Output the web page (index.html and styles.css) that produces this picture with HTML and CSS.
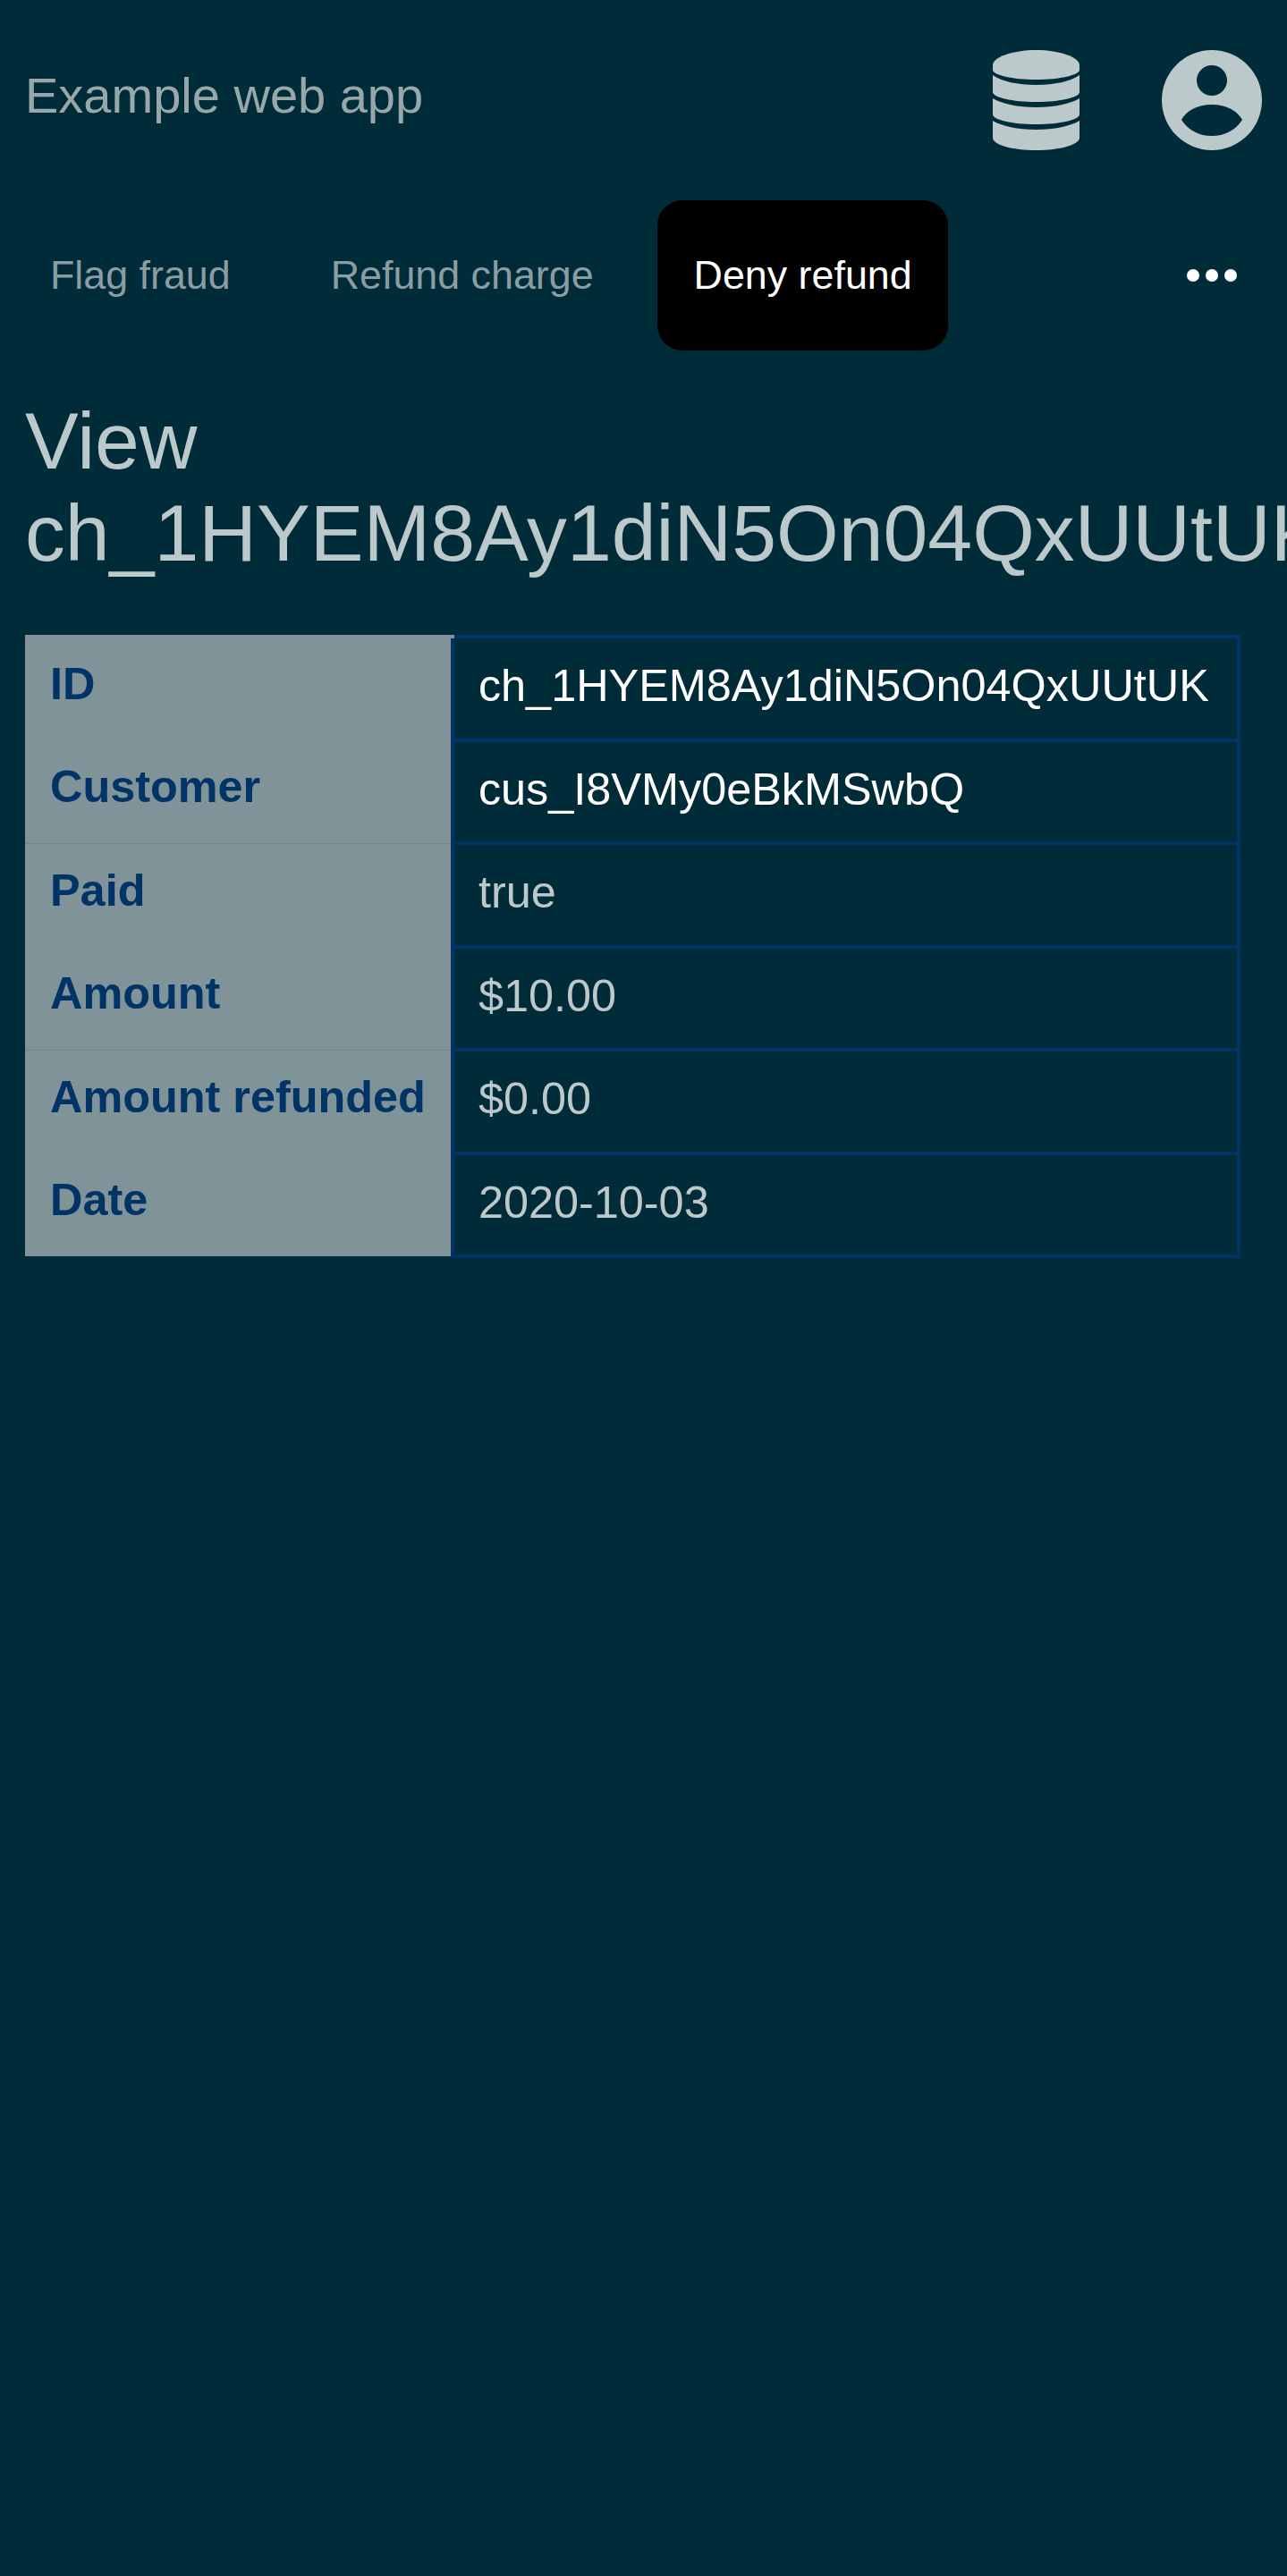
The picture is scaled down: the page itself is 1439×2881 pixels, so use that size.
FILE: index.html
```html
<!DOCTYPE html>
<html lang="en">
<head>
    <meta charset="UTF-8">
    <meta name="viewport" content="width=device-width, initial-scale=1.0">
    <title>Example web app</title>
    <link rel="stylesheet" href="styles.css">
</head>
<body>
    <header class="topbar">
        <a class="brand" href="#">Example web app</a>
        <div class="topbar-icons">
            <svg class="icon icon-db" viewBox="0 0 97 112">
                <path d="M97 17v5C97 28 75 33 48.500 33S0 28 0 22V17C0 8 22 0 48.500 0S97 8 97 17z"/>
                <path d="M97 28v19C97 53 75 58 48.500 58S0 53 0 47V28C10 35 28 39 48.500 39S87 35 97 28z"/>
                <path d="M97 54v18C97 78 75 83 48.500 83S0 78 0 72V54C10 60 28 64 48.500 64S87 60 97 54z"/>
                <path d="M97 79v19C97 106 75 112 48.500 112S0 106 0 98V79C10 85 28 89 48.500 89S87 85 97 79z"/>
            </svg>
            <svg class="icon icon-user" viewBox="0 0 112 112">
                <path fill-rule="evenodd" d="M56 0a56 56 0 1 1 0 112A56 56 0 0 1 56 0zM56 17a17 17 0 1 0 0 34a17 17 0 0 0 0-34zM56 61C40 61 27 68 22 78C30 90 42 96 56 96S82 90 90 78C85 68 72 61 56 61z"/>
            </svg>
        </div>
    </header>

    <nav class="tabs">
        <a class="tab" href="#">Flag fraud</a>
        <a class="tab" href="#">Refund charge</a>
        <a class="tab tab-active" href="#">Deny refund</a>
        <a class="tab-more" href="#">
            <svg viewBox="0 0 56 14"><circle cx="7" cy="7" r="7"/><circle cx="28" cy="7" r="7"/><circle cx="49" cy="7" r="7"/></svg>
        </a>
    </nav>

    <main class="content">
        <h1 class="title">View ch_1HYEM8Ay1diN5On04QxUUtUK</h1>
        <table class="details">
            <tr><th>ID</th><td><a href="#">ch_1HYEM8Ay1diN5On04QxUUtUK</a></td></tr>
            <tr class="row-split"><th>Customer</th><td><a href="#">cus_I8VMy0eBkMSwbQ</a></td></tr>
            <tr><th>Paid</th><td>true</td></tr>
            <tr class="row-split"><th>Amount</th><td>$10.00</td></tr>
            <tr><th>Amount refunded</th><td>$0.00</td></tr>
            <tr><th>Date</th><td>2020-10-03</td></tr>
        </table>
    </main>
</body>
</html>
```

FILE: styles.css
```css
body {
    margin: 0;
    min-height: 2881px;
    background-color: #002b38;
    color: #bcc9cb;
    font-family: "Liberation Sans", Arial, sans-serif;
    overflow-x: hidden;
}

a {
    color: inherit;
    text-decoration: none;
}

.topbar {
    display: flex;
    justify-content: space-between;
    align-items: center;
    padding: 56px 28.500px 56px 28px;
}

.brand {
    margin-bottom: 12px;
    font-size: 56px;
    color: #98a8aa;
}

.topbar-icons {
    display: flex;
    align-items: center;
    gap: 91.500px;
}

.icon {
    display: block;
    height: 112px;
    fill: #bcc9cb;
}

.icon-db {
    width: 97px;
}

.icon-user {
    width: 112px;
}

.tabs {
    display: flex;
    align-items: center;
    padding: 0 56px 0 28px;
}

.tab {
    padding: 43px 28px 45px;
    font-size: 44.800px;
    line-height: 80px;
    color: #8a9da3;
    border-radius: 28px;
}

.tab + .tab {
    margin-left: 56px;
}

.tab + .tab-active {
    margin-left: 43px;
    padding-left: 41px;
    padding-right: 40px;
    background-color: #000;
    color: #fff;
}

.tab-more {
    margin-left: auto;
}

.tab-more svg {
    display: block;
    width: 56px;
    height: 14px;
    fill: #fff;
}

.content {
    padding: 50px 28px 0;
}

.title {
    margin: 0 0 62px;
    font-size: 89.600px;
    font-weight: 400;
    line-height: 103px;
}

.details {
    border-collapse: collapse;
    font-size: 50.400px;
    line-height: 55.500px;
}

.details th {
    padding: 24px 28px 28px;
    background-color: #7f9399;
    color: #003366;
    text-align: left;
    font-weight: 700;
    vertical-align: top;
    white-space: nowrap;
}

.details tr:first-child th {
    padding-top: 23px;
    border-top: 4px solid #7f9399;
}

.details .row-split th {
    border-bottom: 1px solid #71868c;
}

.details td {
    padding: 25px 31px 31px 27px;
    border: 4px solid #003366;
    white-space: nowrap;
}

.details td a {
    color: #fff;
}
```
